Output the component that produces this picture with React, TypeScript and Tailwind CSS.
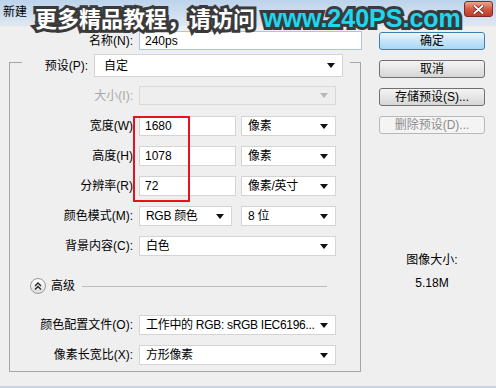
import React from "react";

// Photoshop「新建」对话框（Win7 经典外观）

const FONT = "font-['Liberation_Sans','Noto_Sans_CJK_SC',sans-serif]";

function Arrow({ disabled }: { disabled?: boolean }) {
  return (
    <svg width="8" height="5" viewBox="0 0 8 5" className="shrink-0">
      <path d="M0 0h8L4 5z" fill={disabled ? "#b8b8b8" : "#111"} />
    </svg>
  );
}

function Field({ value, w, h = "h-[20px]" }: { value: string; w: string; h?: string }) {
  return (
    <div className={`${w} ${h} flex items-center border border-[#d4d4d4] bg-white px-[5px] text-[12px] text-black`}>
      {value}
    </div>
  );
}

function Select({ value, w, h = "h-[20px]", disabled }: { value: string; w: string; h?: string; disabled?: boolean }) {
  return (
    <div
      className={`${w} ${h} flex items-center justify-between border pl-[6px] pr-[7px] text-[12px] ${
        disabled ? "border-[#d9d9d9] bg-[#eeeeee]" : "border-[#d4d4d4] bg-white text-black"
      }`}
    >
      <span className="overflow-hidden whitespace-nowrap tracking-[-0.3px]">{value}</span>
      <Arrow disabled={disabled} />
    </div>
  );
}

function Row({ label, disabled, children, className = "" }: { label: string; disabled?: boolean; children: React.ReactNode; className?: string }) {
  return (
    <div className={`flex items-center ${className}`}>
      <div className={`w-[123px] text-right text-[12px] ${disabled ? "text-[#a8a8a8]" : "text-black"}`}>{label}</div>
      <div className="ml-[6px] flex items-center">{children}</div>
    </div>
  );
}

function Btn({ label, kind = "normal" }: { label: string; kind?: "default" | "normal" | "disabled" }) {
  const cls =
    kind === "default"
      ? "border-[#3c7fb1] bg-gradient-to-b from-[#eaf6fd] via-[#c4e5f8] to-[#a7d9f5] text-black"
      : kind === "disabled"
      ? "border-[#b5b9bc] bg-[#f4f4f4] text-[#8c8c8c]"
      : "border-[#707070] bg-gradient-to-b from-[#f4f4f4] via-[#e6e6e6] to-[#d6d6d6] text-black";
  return (
    <div className={`flex h-[18px] w-[106px] items-center justify-center rounded-[3px] border text-[12px] ${cls}`}>
      {label}
    </div>
  );
}

export default function App() {
  return (
    <div className={`relative flex h-[388px] w-[496px] flex-col overflow-hidden bg-[#efefef] ${FONT}`}>
      {/* 标题栏 */}
      <div className="flex h-[26px] shrink-0 items-start bg-gradient-to-b from-[#bcd3ec] to-[#e0e8f1] pl-[3px] pt-[3px] text-[12px] text-black">
        新建
      </div>
      <div className="absolute right-[3px] top-[1px] flex h-[16px] w-[29px] items-center justify-center rounded-[3px] border border-[#7d2c22] bg-gradient-to-b from-[#e9a592] via-[#d25a45] to-[#c1392a]">
        <svg width="11" height="9" viewBox="0 0 11 9">
          <path d="M1.5 1l8 7M9.5 1l-8 7" stroke="#5a1a12" strokeWidth="3.4" strokeLinecap="round" />
          <path d="M1.5 1l8 7M9.5 1l-8 7" stroke="#fff" strokeWidth="2" strokeLinecap="round" />
        </svg>
      </div>

      <div className="flex flex-1">
        {/* 左侧 */}
        <div className="w-[362px]">
          <div className="mt-[5px] flex items-center">
            <div className="w-[133px] text-right text-[12px] text-black">名称(N):</div>
            <div className="ml-[6px] flex h-[19px] w-[223px] items-center border border-[#a9c6e8] bg-white px-[5px] text-[12px] text-black">
              240ps
            </div>
          </div>

          <div className="ml-[9px] mt-[12px] w-[352px] border border-[#a6a6a6] pb-[6px]">
            <div className="-mt-[9px] ml-[12px] flex h-[23px] w-[328px] items-center bg-[#efefef]">
              <div className="w-[66px] text-right text-[12px] text-black">预设(P):</div>
              <div className="ml-[6px] flex h-[23px] w-[249px] items-center justify-between border border-[#d4d4d4] bg-white pl-[9px] pr-[7px] text-[12px] text-black">
                <span>自定</span>
                <Arrow />
              </div>
            </div>

            <Row label="大小(I):" disabled className="mt-[9px]">
              <Select value="" w="w-[197px]" h="h-[19px]" disabled />
            </Row>
            <Row label="宽度(W)" className="mt-[11px]">
              <Field value="1680" w="w-[97px]" />
              <div className="ml-[5px]">
                <Select value="像素" w="w-[95px]" />
              </div>
            </Row>
            <Row label="高度(H)" className="mt-[10px]">
              <Field value="1078" w="w-[97px]" />
              <div className="ml-[5px]">
                <Select value="像素" w="w-[95px]" />
              </div>
            </Row>
            <Row label="分辨率(R)" className="mt-[10px]">
              <Field value="72" w="w-[97px]" />
              <div className="ml-[5px]">
                <Select value="像素/英寸" w="w-[95px]" />
              </div>
            </Row>
            <Row label="颜色模式(M):" className="mt-[10px]">
              <Select value="RGB 颜色" w="w-[93px]" />
              <div className="ml-[9px]">
                <Select value="8 位" w="w-[95px]" />
              </div>
            </Row>
            <Row label="背景内容(C):" className="mt-[10px]">
              <Select value="白色" w="w-[197px]" />
            </Row>

            {/* 高级 */}
            <div className="mt-[22px] flex h-[16px] items-center pl-[20px]">
              <div className="flex h-[16px] w-[16px] items-center justify-center rounded-full border border-[#9a9a9a] bg-gradient-to-b from-white to-[#dedede]">
                <svg width="8" height="8" viewBox="0 0 8 8">
                  <path d="M1 4l3-3 3 3M1 7.5l3-3 3 3" stroke="#222" strokeWidth="1.3" fill="none" />
                </svg>
              </div>
              <span className="ml-[5px] text-[12px] text-black">高级</span>
              <div className="ml-[7px] h-px w-[245px] bg-[#bdbdbd]" />
            </div>

            <Row label="颜色配置文件(O):" className="mt-[21px]">
              <Select value="工作中的 RGB: sRGB IEC6196..." w="w-[197px]" />
            </Row>
            <Row label="像素长宽比(X):" className="mt-[10px]">
              <Select value="方形像素" w="w-[197px]" />
            </Row>
          </div>
        </div>

        {/* 右侧按钮 */}
        <div className="ml-[17px] mt-[6px] flex w-[106px] flex-col gap-[10px]">
          <Btn label="确定" kind="default" />
          <Btn label="取消" />
          <Btn label="存储预设(S)..." />
          <Btn label="删除预设(D)..." kind="disabled" />
          <div className="mt-[108px] text-center text-[12px] leading-[16px] text-black">图像大小:</div>
          <div className="-mt-[3px] text-center text-[12px] leading-[16px] text-black">5.18M</div>
        </div>
      </div>
      <div className="h-[2px] shrink-0 bg-[#c3d6ec]" />

      {/* 红框标注 */}
      <div className="absolute left-[133px] top-[116px] h-[86px] w-[57px] border-2 border-[#e8121f]" />

      {/* 水印 */}
      <div className="absolute left-[35px] top-[6px] flex items-baseline whitespace-nowrap font-bold leading-none [paint-order:stroke_fill] [-webkit-text-stroke:6px_#3a3a3a]">
        <span className="font-['Noto_Sans_CJK_SC',sans-serif] text-[22px] text-white">更多精品教程，请访问</span>
        <span className="ml-[8px] font-['Liberation_Sans',sans-serif] text-[25px] text-[#1fd6ef]">www.240PS.com</span>
      </div>
    </div>
  );
}
